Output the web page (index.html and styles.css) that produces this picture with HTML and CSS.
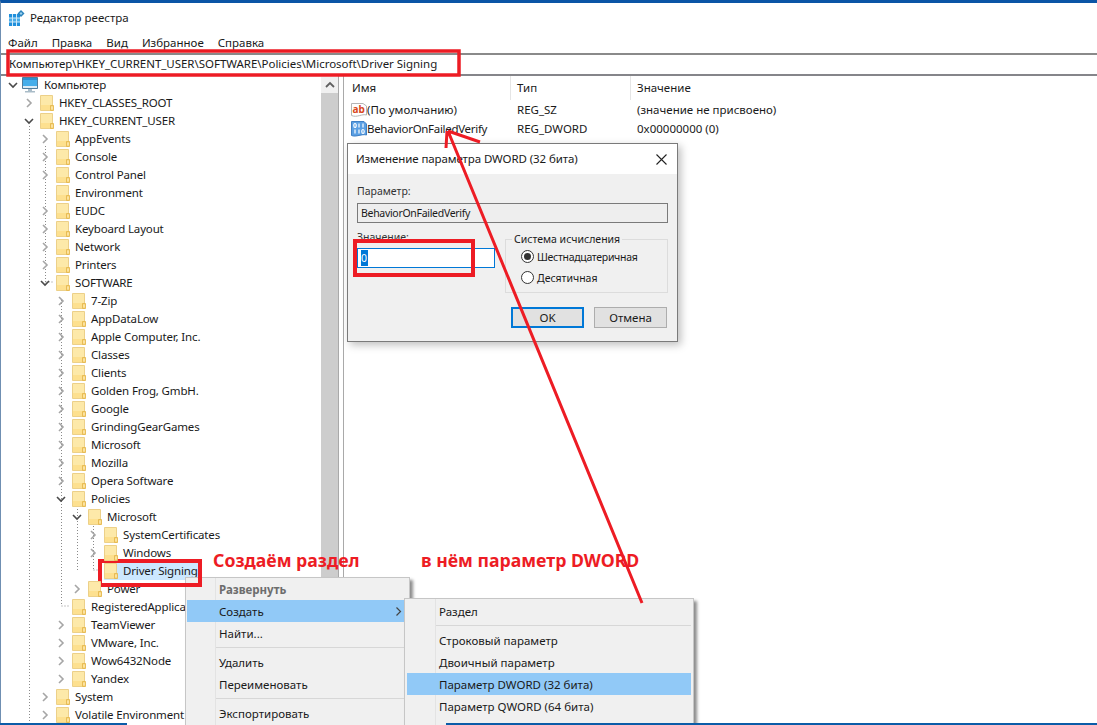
FILE: index.html
```html
<!DOCTYPE html>
<html lang="ru">
<head>
<meta charset="utf-8">
<title>Редактор реестра</title>
<link rel="stylesheet" href="styles.css">
</head>
<body>
<svg class="defs" width="0" height="0" aria-hidden="true">
  <symbol id="folder" viewBox="0 0 14 16">
    <path d="M.5 .5H12.500V15.500H.5Z" fill="#fde9a9" stroke="#ecd089"/>
    <path d="M1 10H12V15H1Z" fill="#fde08f"/>
    <path d="M10.500 10.500H13.500V15.500H10.500Z" fill="#f6cf6c" stroke="#e5b94f" stroke-width=".9"/>
    <path d="M11.500 11.500H12.500V14.500H11.500Z" fill="#fff6d5"/>
  </symbol>
  <symbol id="open" viewBox="0 0 10 10"><path d="M1 3L5 7L9 3" fill="none" stroke="#4a4a4a" stroke-width="1.600"/></symbol>
  <symbol id="closed" viewBox="0 0 10 10"><path d="M3 1L7 5L3 9" fill="none" stroke="#a6a6a6" stroke-width="1.600"/></symbol>
</svg>
<div class="window">
  <header class="titlebar">
    <svg class="appicon" width="16" height="16" viewBox="0 0 16 16">
      <path d="M0 4H11V16H0Z" fill="#1f8fdc"/>
      <path d="M0 8H11V12H0Z" fill="#49ace8"/>
      <path d="M3.500 4V16M7.500 4V16M0 8H11M0 12H11" stroke="#cfe9f8"/>
      <path d="M12 0L15.500 3.500L12 7L8.500 3.500Z" fill="#2a83bd"/>
      <path d="M12 2L13.500 3.500L12 5L10.500 3.500Z" fill="#9fd3ef"/>
    </svg>
    <span>Редактор реестра</span>
  </header>
  <nav class="menubar"><span>Файл</span><span>Правка</span><span>Вид</span><span>Избранное</span><span>Справка</span></nav>
  <div class="address">Компьютер\HKEY_CURRENT_USER\SOFTWARE\Policies\Microsoft\Driver Signing</div>
  <main class="panes">
    <section class="tree">
      <svg class="guides" width="110" height="650" aria-hidden="true">
        <path d="M29.500 50V650M45.500 70V206M45.500 206H54M61.500 224V530M61.500 530H70M77.500 430V494M93.500 450V494M93.500 494H102" fill="none" stroke="#8a8a8a" stroke-dasharray="1 2"/>
      </svg>
      <div class="row l0"><svg class="chev"><use href="#open"/></svg>
        <svg class="pc" width="16" height="16" viewBox="0 0 16 16"><path d="M.5 .5H15.500V11.500H.5Z" fill="#45aeea" stroke="#4f7d9c"/><path d="M1 1H15V3H1Z" fill="#2f8fd0"/><path d="M1 9H15V11H1Z" fill="#dcecf5"/><path d="M6 12H10V14H6ZM3 14H13V15.500H3Z" fill="#a9bcc8"/></svg>
        <span>Компьютер</span></div>
      <div class="row l1"><svg class="chev"><use href="#closed"/></svg><svg class="fold"><use href="#folder"/></svg><span>HKEY_CLASSES_ROOT</span></div>
      <div class="row l1"><svg class="chev"><use href="#open"/></svg><svg class="fold"><use href="#folder"/></svg><span>HKEY_CURRENT_USER</span></div>
      <div class="row l2"><svg class="chev"><use href="#closed"/></svg><svg class="fold"><use href="#folder"/></svg><span>AppEvents</span></div>
      <div class="row l2"><svg class="chev"><use href="#closed"/></svg><svg class="fold"><use href="#folder"/></svg><span>Console</span></div>
      <div class="row l2"><svg class="chev"><use href="#closed"/></svg><svg class="fold"><use href="#folder"/></svg><span>Control Panel</span></div>
      <div class="row l2"><svg class="chev"></svg><svg class="fold"><use href="#folder"/></svg><span>Environment</span></div>
      <div class="row l2"><svg class="chev"><use href="#closed"/></svg><svg class="fold"><use href="#folder"/></svg><span>EUDC</span></div>
      <div class="row l2"><svg class="chev"><use href="#closed"/></svg><svg class="fold"><use href="#folder"/></svg><span>Keyboard Layout</span></div>
      <div class="row l2"><svg class="chev"><use href="#closed"/></svg><svg class="fold"><use href="#folder"/></svg><span>Network</span></div>
      <div class="row l2"><svg class="chev"><use href="#closed"/></svg><svg class="fold"><use href="#folder"/></svg><span>Printers</span></div>
      <div class="row l2"><svg class="chev"><use href="#open"/></svg><svg class="fold"><use href="#folder"/></svg><span>SOFTWARE</span></div>
      <div class="row l3"><svg class="chev"><use href="#closed"/></svg><svg class="fold"><use href="#folder"/></svg><span>7-Zip</span></div>
      <div class="row l3"><svg class="chev"><use href="#closed"/></svg><svg class="fold"><use href="#folder"/></svg><span>AppDataLow</span></div>
      <div class="row l3"><svg class="chev"><use href="#closed"/></svg><svg class="fold"><use href="#folder"/></svg><span>Apple Computer, Inc.</span></div>
      <div class="row l3"><svg class="chev"><use href="#closed"/></svg><svg class="fold"><use href="#folder"/></svg><span>Classes</span></div>
      <div class="row l3"><svg class="chev"><use href="#closed"/></svg><svg class="fold"><use href="#folder"/></svg><span>Clients</span></div>
      <div class="row l3"><svg class="chev"><use href="#closed"/></svg><svg class="fold"><use href="#folder"/></svg><span>Golden Frog, GmbH.</span></div>
      <div class="row l3"><svg class="chev"><use href="#closed"/></svg><svg class="fold"><use href="#folder"/></svg><span>Google</span></div>
      <div class="row l3"><svg class="chev"><use href="#closed"/></svg><svg class="fold"><use href="#folder"/></svg><span>GrindingGearGames</span></div>
      <div class="row l3"><svg class="chev"><use href="#closed"/></svg><svg class="fold"><use href="#folder"/></svg><span>Microsoft</span></div>
      <div class="row l3"><svg class="chev"><use href="#closed"/></svg><svg class="fold"><use href="#folder"/></svg><span>Mozilla</span></div>
      <div class="row l3"><svg class="chev"><use href="#closed"/></svg><svg class="fold"><use href="#folder"/></svg><span>Opera Software</span></div>
      <div class="row l3"><svg class="chev"><use href="#open"/></svg><svg class="fold"><use href="#folder"/></svg><span>Policies</span></div>
      <div class="row l4"><svg class="chev"><use href="#open"/></svg><svg class="fold"><use href="#folder"/></svg><span>Microsoft</span></div>
      <div class="row l5"><svg class="chev"><use href="#closed"/></svg><svg class="fold"><use href="#folder"/></svg><span>SystemCertificates</span></div>
      <div class="row l5"><svg class="chev"><use href="#closed"/></svg><svg class="fold"><use href="#folder"/></svg><span>Windows</span></div>
      <div class="row l5 selected"><svg class="chev"></svg><svg class="fold"><use href="#folder"/></svg><span>Driver Signing</span></div>
      <div class="row l4"><svg class="chev"><use href="#closed"/></svg><svg class="fold"><use href="#folder"/></svg><span>Power</span></div>
      <div class="row l3"><svg class="chev"></svg><svg class="fold"><use href="#folder"/></svg><span>RegisteredApplications</span></div>
      <div class="row l3"><svg class="chev"><use href="#closed"/></svg><svg class="fold"><use href="#folder"/></svg><span>TeamViewer</span></div>
      <div class="row l3"><svg class="chev"><use href="#closed"/></svg><svg class="fold"><use href="#folder"/></svg><span>VMware, Inc.</span></div>
      <div class="row l3"><svg class="chev"><use href="#closed"/></svg><svg class="fold"><use href="#folder"/></svg><span>Wow6432Node</span></div>
      <div class="row l3"><svg class="chev"><use href="#closed"/></svg><svg class="fold"><use href="#folder"/></svg><span>Yandex</span></div>
      <div class="row l2"><svg class="chev"><use href="#closed"/></svg><svg class="fold"><use href="#folder"/></svg><span>System</span></div>
      <div class="row l2"><svg class="chev"><use href="#closed"/></svg><svg class="fold"><use href="#folder"/></svg><span>Volatile Environment</span></div>
    </section>
    <div class="scrollbar">
      <div class="scrollup"><svg width="10" height="10" viewBox="0 0 10 10"><path d="M1 7L5 3L9 7" fill="none" stroke="#606060" stroke-width="1.800"/></svg></div>
    </div>
    <div class="splitter"></div>
    <section class="list">
      <div class="lhead"><span class="c1">Имя</span><span class="c2">Тип</span><span class="c3">Значение</span></div>
      <div class="lrow">
        <span class="c1 named">
          <svg width="16" height="16" viewBox="0 0 16 16"><path d="M.5 1.500H12L15.500 4V13C11 11.500 6 16 .5 13.500Z" fill="#fff" stroke="#b5b5b5"/><text class="ab" x="1.500" y="11">ab</text></svg>
          (По умолчанию)</span>
        <span class="c2">REG_SZ</span><span class="c3">(значение не присвоено)</span>
      </div>
      <div class="lrow">
        <span class="c1 named">
          <svg width="16" height="16" viewBox="0 0 16 16"><path d="M.5 .5H13L15.500 3V14C11 12.500 5 16.500 .5 14.500Z" fill="#5a9fe3" stroke="#3f7fc4"/><g fill="none" stroke="#fff" stroke-width="1.200"><ellipse cx="4" cy="4.500" rx="1.200" ry="2"/><path d="M8 2.500V6.500M12 2.500V6.500M4 8.500V12.500M8 8.500V12.500"/><ellipse cx="12" cy="10.500" rx="1.200" ry="2"/></g></svg>
          <span class="tight">BehaviorOnFailedVerify</span></span>
        <span class="c2">REG_DWORD</span><span class="c3">0x00000000 (0)</span>
      </div>
    </section>
  </main>
</div>

<aside class="dialog">
  <div class="dtitle"><span>Изменение параметра DWORD (32 бита)</span>
    <svg width="11" height="11" viewBox="0 0 11 11"><path d="M.5 .5L10.500 10.500M10.500 .5L.5 10.500" stroke="#222" stroke-width="1.100"/></svg></div>
  <div class="dbody">
    <div class="dlabel">Параметр:</div>
    <div class="dname tight">BehaviorOnFailedVerify</div>
    <div class="dcols">
      <div class="dval">
        <div class="dlabel">Значение:</div>
        <div class="dinput"><span class="sel">0</span></div>
      </div>
      <fieldset class="dgroup">
        <legend>Система исчисления</legend>
        <div class="radio tight"><span class="dot on"></span>Шестнадцатеричная</div>
        <div class="radio"><span class="dot"></span>Десятичная</div>
      </fieldset>
    </div>
    <div class="dbuttons"><span class="btn primary">OK</span><span class="btn">Отмена</span></div>
  </div>
</aside>

<aside class="menu menu1">
  <div class="mi dis"><b>Развернуть</b></div>
  <div class="mi hl">Создать<svg width="7" height="9" viewBox="0 0 7 9"><path d="M1.500 .5L5.500 4.500L1.500 8.500" fill="none" stroke="#444" stroke-width="1.200"/></svg></div>
  <div class="mi">Найти...</div>
  <div class="msep"></div>
  <div class="mi">Удалить</div>
  <div class="mi">Переименовать</div>
  <div class="msep"></div>
  <div class="mi">Экспортировать</div>
  <div class="mi">Разрешения...</div>
</aside>

<aside class="menu menu2">
  <div class="mi">Раздел</div>
  <div class="msep"></div>
  <div class="mi">Строковый параметр</div>
  <div class="mi">Двоичный параметр</div>
  <div class="mi hl">Параметр DWORD (32 бита)</div>
  <div class="mi">Параметр QWORD (64 бита)</div>
  <div class="mi">Мультистроковый параметр</div>
</aside>

<div class="taskbar"></div>

<svg class="marks" width="1097" height="725" aria-hidden="true">
  <g fill="none" stroke="#ed1c24">
    <rect x="8" y="51" width="451" height="24" stroke-width="3.500"/>
    <rect x="355" y="241" width="118" height="34" stroke-width="4"/>
    <rect x="100" y="561" width="100" height="24" stroke-width="4"/>
    <path d="M642 603L448 131M448 131L480 142M447 131L446 148" stroke-width="3"/>
  </g>
</svg>
<div class="note note1">Создаём раздел</div>
<div class="note note2">в нём параметр DWORD</div>
</body>
</html>
```
FILE: styles.css
```css
* { box-sizing: border-box; }
html, body { margin: 0; height: 725px; overflow: hidden; background: #fff; }
body { font: 11.5px/16px "Noto Sans", "Liberation Sans", sans-serif; color: #1a1a1a; position: relative; }
.defs { position: absolute; }
.window { height: 725px; display: flex; flex-direction: column; border-top: 3px solid #0b55a6; border-left: 1px solid #6f8fb2; }
.titlebar { height: 30px; display: flex; align-items: center; gap: 5px; padding-left: 8px; }
.appicon { flex: none; }
.menubar { height: 20px; display: flex; gap: 14px; padding: 2px 0 0 7px; }
.address { height: 23px; border-top: 2px solid #8a8a8a; border-bottom: 2px solid #85858a; padding: 1px 0 0 8px; white-space: nowrap; letter-spacing: -.03px; }
.panes { flex: 1; min-height: 0; display: flex; }
.tree { width: 320px; position: relative; overflow: hidden; }
.guides { position: absolute; left: -1px; top: 0; }
.row { height: 18px; display: flex; align-items: center; position: relative; white-space: nowrap; }
.row span { margin-top: -1px; letter-spacing: -.15px; }
.chev { width: 10px; height: 10px; flex: none; margin-right: 6px; }
.fold { width: 14px; height: 16px; flex: none; margin-right: 5px; position: relative; z-index: 1; }
.pc { flex: none; margin-right: 6px; }
.l0 { padding-left: 7px; }
.l0 .chev { margin-right: 4px; }
.l1 { padding-left: 23px; }
.l2 { padding-left: 39px; }
.l3 { padding-left: 55px; }
.l4 { padding-left: 71px; }
.l5 { padding-left: 87px; }
.row.selected span { background: #cce8ff; margin: 0 0 0 -19px; padding: 0 1px 1px 19px; }
.scrollbar { width: 17px; background: #cdcdcd; margin-top: 1px; }
.scrollup { height: 16px; background: #f0f0f0; display: flex; align-items: center; justify-content: center; }
.splitter { width: 6px; border-left: 1px solid #a9a9a9; border-right: 1px solid #a9a9a9; }
.list { flex: 1; min-width: 0; padding-left: 8px; }
.lhead { height: 24px; display: flex; align-items: center; }
.lhead .c2, .lhead .c3 { border-left: 1px solid #e5e5e5; height: 24px; line-height: 24px; padding-left: 6px; }
.lhead .c1, .lrow .c1 { width: 158px; }
.lhead .c2, .lrow .c2 { width: 120px; }
.lrow { height: 19px; display: flex; align-items: center; }
.lrow .c2, .lrow .c3 { padding-left: 7px; }
.named { display: flex; align-items: center; margin-left: -1px; padding-right: 1px; white-space: nowrap; }
.tight { letter-spacing: -.3px; }
.lrow .c2 { margin-left: 1px; }
.ab { font: bold 10px "Noto Sans", sans-serif; fill: #d9481c; }
.taskbar { position: absolute; left: 0; right: 0; bottom: 0; height: 2px; background: linear-gradient(90deg, #0b5ca8 127px, transparent 127px, transparent 446px, #0b5ca8 446px); }

.dialog { position: absolute; left: 347px; top: 143px; width: 331px; height: 199px; border: 1px solid #7a7a7a; background: #f0f0f0; box-shadow: 3px 3px 8px rgba(0,0,0,.25); }
.dtitle { height: 30px; background: #fff; display: flex; align-items: center; justify-content: space-between; padding: 0 10px 0 8px; letter-spacing: -.1px; }
.dbody { padding: 9px 9px 0 9px; font-size: 10.5px; }
.dlabel { height: 16px; color: #333; }
.dname { height: 20px; margin-top: 4px; border: 1px solid #7a7a7a; background: #eee; padding: 1px 3px; width: 311px; }
.dcols { display: flex; margin-top: 6px; }
.dval { width: 148px; }
.dinput { width: 138px; height: 20px; margin-top: 3px; border: 1px solid #0078d7; background: #fff; padding: 1px 3px; }
.sel { background: #0078d7; color: #fff; display: inline-block; width: 7px; }
.dgroup { margin: 3px 0 0; padding: 0 0 0 15px; width: 163px; height: 61px; border: 1px solid #dcdcdc; }
.dgroup legend { padding: 0 2px; margin-left: -9px; line-height: 14px; }
.radio { display: flex; align-items: center; gap: 3px; height: 21px; }
.dot { width: 13px; height: 13px; border-radius: 50%; border: 1px solid #333; background: #fff; position: relative; }
.dot.on::after { content: ""; position: absolute; left: 2px; top: 2px; width: 7px; height: 7px; border-radius: 50%; background: #333; }
.dbuttons { display: flex; gap: 10px; margin-top: 14px; padding-left: 154px; }
.btn { width: 73px; height: 21px; border: 1px solid #adadad; background: #e1e1e1; text-align: center; line-height: 19px; font-size: 11.5px; }
.primary { border: 2px solid #0078d7; line-height: 17px; }

.menu { position: absolute; background: #f0f0f0; border: 1px solid #c6c6c6; box-shadow: 3px 3px 3px rgba(0,0,0,.45); }
.menu1 { left: 185px; top: 577px; width: 225px; height: 160px; padding: 0 1px; background: linear-gradient(#e3e3e3,#e3e3e3) 29px 0/1px 100% no-repeat #f0f0f0; }
.menu2 { left: 404px; top: 598px; width: 290px; height: 140px; padding: 1px 2px; background: linear-gradient(#e3e3e3,#e3e3e3) 30px 0/1px 100% no-repeat #f0f0f0; }
.mi { height: 22px; line-height: 21px; position: relative; display: flex; align-items: center; justify-content: space-between; white-space: nowrap; }
.menu1 .mi { padding-left: 32px; padding-right: 6px; }
.menu2 .mi { padding-left: 32px; }
.hl { background: #91c9f7; }
.dis { color: #6d6d6d; }
.msep { height: 1px; margin: 3px 0 3px 29px; background: #d7d7d7; }

.marks { position: absolute; left: 0; top: 0; pointer-events: none; }
.note { position: absolute; top: 548px; color: #ed1c24; font: bold 17.700px/24px "Noto Sans", sans-serif; white-space: nowrap; }
.note1 { left: 213px; }
.note2 { left: 421px; }
```
